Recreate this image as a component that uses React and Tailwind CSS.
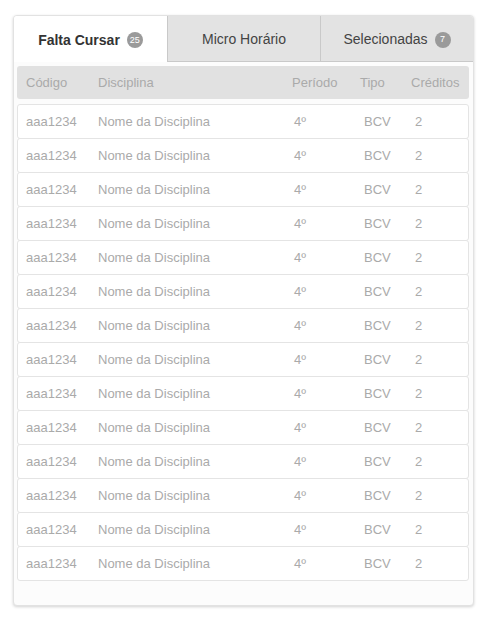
import React from 'react';

const rows = Array.from({ length: 14 }, () => ({
  codigo: 'aaa1234',
  nome: 'Nome da Disciplina',
  periodo: '4º',
  tipo: 'BCV',
  creditos: '2',
}));

const Badge = ({ n }) => (
  <span className="ml-[7px] inline-flex h-[16px] w-[16px] items-center justify-center rounded-full bg-[#9a9a9a] text-[9px] font-normal leading-none text-white">
    {n}
  </span>
);

export default function App() {
  return (
    <div className="min-h-screen bg-white pl-[13px] pt-[15px] font-['Liberation_Sans',Arial,sans-serif]">
      <div className="flex h-[591px] w-[461px] flex-col overflow-hidden rounded-[4px] border border-[#e2e2e2] bg-[#fcfcfc] shadow-[0_1px_3px_rgba(0,0,0,0.18)]">
        {/* Tabs */}
        <div className="grid h-[46px] grid-cols-[153px_153px_1fr]">
          <div className="flex items-center justify-center pt-[2px] bg-white text-[14px] font-bold text-[#333]">
            Falta Cursar
            <Badge n="25" />
          </div>
          <div className="flex items-center justify-center pt-[2px] border-b border-l border-[#c9c9c9] bg-[#e3e3e3] text-[14px] text-[#444]">
            Micro Horário
          </div>
          <div className="flex items-center justify-center pt-[2px] border-b border-l border-[#c9c9c9] bg-[#e3e3e3] text-[14px] text-[#444]">
            Selecionadas
            <Badge n="7" />
          </div>
        </div>

        {/* Table */}
        <div className="px-[3px] pr-[4px] pt-[4px]">
          <div className="flex h-[33px] items-center rounded-[3px] bg-[#e1e1e1] text-[13px] text-[#aaa]">
            <div className="w-[81px] pl-[9px]">Código</div>
            <div className="w-[194px]">Disciplina</div>
            <div className="w-[68px]">Período</div>
            <div className="w-[51px]">Tipo</div>
            <div>Créditos</div>
          </div>
          <div className="mt-[5px] flex flex-col">
            {rows.map((r, i) => (
              <div
                key={i}
                className={`flex h-[35px] items-center rounded-[3px] border border-[#e4e4e4] bg-white text-[13px] text-[#aaa] ${i > 0 ? '-mt-px' : ''}`}
              >
                <div className="w-[80px] pl-[8px]">{r.codigo}</div>
                <div className="w-[196px]">{r.nome}</div>
                <div className="w-[70px]">{r.periodo}</div>
                <div className="w-[51px]">{r.tipo}</div>
                <div>{r.creditos}</div>
              </div>
            ))}
          </div>
        </div>
      </div>
    </div>
  );
}
